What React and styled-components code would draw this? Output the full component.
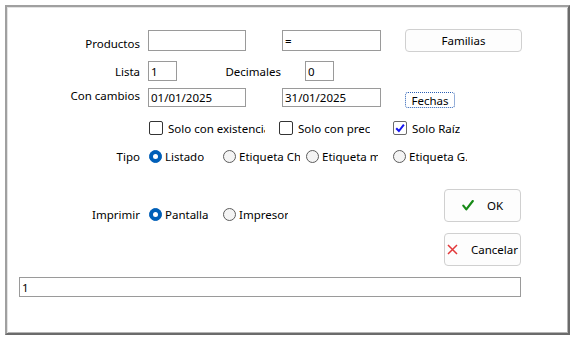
import styled, { createGlobalStyle } from 'styled-components';

const GlobalStyle = createGlobalStyle`
  body {
    margin: 0;
    background: #fff;
    font-family: "Noto Sans", "Open Sans", sans-serif;
    font-size: 11.5px;
    color: #000;
  }
`;

const Window = styled.div`
  box-sizing: border-box;
  margin: 5px 0 0 5px;
  width: 565px;
  height: 330px;
  border: 2px solid;
  border-color: #a0a0a0 #6b6b6b #6b6b6b #a0a0a0;
  box-shadow: inset 1px 1px 0 #e3e3e3, inset -1px -1px 0 #b4b4b4;
  padding-top: 22px;
  display: flex;
  flex-direction: column;
`;

const Row = styled.div`
  display: flex;
  align-items: ${p => p.$align || 'center'};
  height: ${p => p.$h}px;
  margin-top: ${p => p.$mt || 0}px;
`;

const Label = styled.span`
  flex-shrink: 0;
  width: ${p => p.$w || 133}px;
  margin-right: ${p => (p.$mr === undefined ? 8 : p.$mr)}px;
  padding-top: ${p => p.$dy || 0}px;
  text-align: right;
  white-space: nowrap;
`;

const Field = styled.input`
  box-sizing: border-box;
  flex-shrink: 0;
  width: ${p => p.$w}px;
  height: ${p => p.$h || 20}px;
  margin-left: ${p => p.$ml || 0}px;
  align-self: ${p => p.$self || 'auto'};
  padding: 0 2px;
  border: 1px solid #9a9a9a;
  background: #fff;
  font: inherit;
  color: #000;
  outline: none;
`;

const PushButton = styled.button`
  box-sizing: border-box;
  flex-shrink: 0;
  width: ${p => p.$w}px;
  height: ${p => p.$h}px;
  margin-left: ${p => p.$ml || 0}px;
  padding: 0;
  border: 1px solid #d0d0d0;
  border-radius: 4px;
  background: #fdfdfd;
  font: inherit;
  color: #000;
  display: flex;
  align-items: center;
  justify-content: center;
  gap: 13px;
`;

const FocusButton = styled(PushButton)`
  align-self: flex-start;
  margin-top: 4px;
  border: 1px dotted #2a5fb4;
  border-radius: 3px;
  background: #fff;
`;

const Choice = styled.div`
  flex-shrink: 0;
  width: ${p => p.$w}px;
  display: flex;
  align-items: center;
  gap: ${p => p.$gap}px;
  white-space: nowrap;
`;

const ChoiceText = styled.span`
  max-width: ${p => p.$clip || 200}px;
  overflow: hidden;
`;

const Box = styled.span`
  box-sizing: border-box;
  flex-shrink: 0;
  width: 14px;
  height: 14px;
  margin-left: 1px;
  border: 1px solid ${p => (p.$on ? '#6a6a6a' : '#333')};
  border-radius: 2px;
  background: #fff;
  display: flex;
  align-items: center;
  justify-content: center;
`;

const Dot = styled.span`
  box-sizing: border-box;
  flex-shrink: 0;
  width: 13px;
  height: 13px;
  margin-left: 1px;
  border-radius: 50%;
  display: flex;
  align-items: center;
  justify-content: center;
  background: ${p => (p.$on ? '#005fb8' : '#f4f4f4')};
  border: 1px solid ${p => (p.$on ? '#005fb8' : '#5c5c5c')};

  &::after {
    content: '';
    width: 5px;
    height: 5px;
    border-radius: 50%;
    background: #fff;
    display: ${p => (p.$on ? 'block' : 'none')};
  }
`;

const Bottom = styled.div`
  display: flex;
  align-items: flex-start;
  height: 77px;
  margin-top: 26px;
`;

const LeftPane = styled.div`
  flex: 1;
  padding-top: 19px;
`;

const ButtonStack = styled.div`
  width: 77px;
  margin-right: 47px;
  display: flex;
  flex-direction: column;
  gap: 11px;
`;

const Status = styled(Field)`
  margin: 11px 0 0 12px;
`;

function Check({ label, on, w, clip }) {
  return (
    <Choice $w={w} $gap={5}>
      <Box $on={on}>
        {on && (
          <svg width="10" height="10" viewBox="0 0 10 10">
            <path d="M1.2 5.2 L3.9 8 L8.9 1.6" fill="none" stroke="#1515f0" strokeWidth="2" />
          </svg>
        )}
      </Box>
      <ChoiceText $clip={clip}>{label}</ChoiceText>
    </Choice>
  );
}

function Radio({ label, on, w, clip }) {
  return (
    <Choice $w={w} $gap={3}>
      <Dot $on={on} />
      <ChoiceText $clip={clip}>{label}</ChoiceText>
    </Choice>
  );
}

export default function App() {
  return (
    <>
      <GlobalStyle />
      <Window>
        <Row $h={23}>
          <Label $dy={5}>Productos</Label>
          <Field $w={98} $h={21} defaultValue="" />
          <Field $w={99} $h={21} $ml={36} defaultValue="=" />
          <PushButton $w={117} $h={23} $ml={24}>Familias</PushButton>
        </Row>

        <Row $h={20} $mt={9}>
          <Label>Lista</Label>
          <Field $w={29} defaultValue="1" />
          <Label $w={104} $mr={24}>Decimales</Label>
          <Field $w={29} defaultValue="0" />
        </Row>

        <Row $h={20} $mt={7} $align="flex-start">
          <Label>Con cambios</Label>
          <Field $w={98} $h={19} defaultValue="01/01/2025" />
          <Field $w={99} $h={19} $ml={36} defaultValue="31/01/2025" />
          <FocusButton $w={50} $h={16} $ml={24}>Fechas</FocusButton>
        </Row>

        <Row $h={16} $mt={12}>
          <Label />
          <Check label="Solo con existencia" w={130} clip={97} />
          <Check label="Solo con precio" w={114} clip={72} />
          <Check label="Solo Raíz" on w={80} />
        </Row>

        <Row $h={13} $mt={14}>
          <Label>Tipo</Label>
          <Radio label="Listado" on w={74} />
          <Radio label="Etiqueta Chica" w={83} clip={61} />
          <Radio label="Etiqueta mediana" w={87} clip={56} />
          <Radio label="Etiqueta G." w={80} clip={58} />
        </Row>

        <Bottom>
          <LeftPane>
            <Row $h={13}>
              <Label>Imprimir</Label>
              <Radio label="Pantalla" on w={74} />
              <Radio label="Impresora" w={80} clip={49} />
            </Row>
          </LeftPane>
          <ButtonStack>
            <PushButton $w={77} $h={33}>
              <svg width="12" height="11" viewBox="0 0 12 11">
                <path d="M1.3 5.6 L4.3 9.4 L10.8 1" fill="none" stroke="#178a17" strokeWidth="2.2" strokeLinecap="round" strokeLinejoin="round" />
              </svg>
              <span>OK</span>
            </PushButton>
            <PushButton $w={77} $h={33}>
              <svg width="11" height="11" viewBox="0 0 11 11">
                <path d="M1 1 L10 10 M10 1 L1 10" stroke="#e2383a" strokeWidth="1.5" />
              </svg>
              <span>Cancelar</span>
            </PushButton>
          </ButtonStack>
        </Bottom>

        <Status $w={502} defaultValue="1" />
      </Window>
    </>
  );
}
